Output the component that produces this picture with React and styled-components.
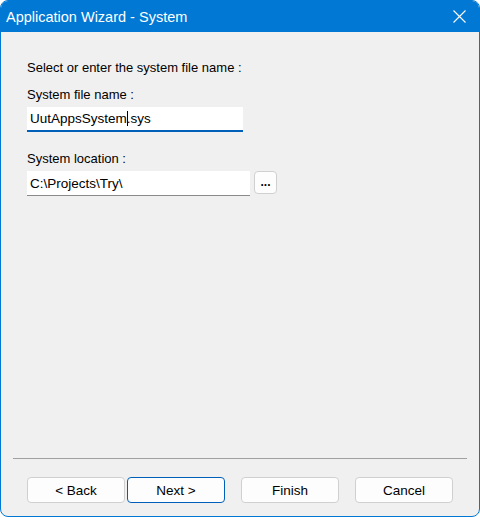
import React from "react";
import styled, { createGlobalStyle } from "styled-components";

const GlobalStyle = createGlobalStyle`
  html, body {
    margin: 0;
    padding: 0;
    background: #ffffff;
  }
  * {
    box-sizing: border-box;
  }
`;

const Window = styled.div`
  width: 480px;
  height: 517px;
  display: flex;
  flex-direction: column;
  border: 1px solid #0078d4;
  border-radius: 8px;
  overflow: hidden;
  background: #f0f0f0;
  font-family: "Segoe UI", "Liberation Sans", Arial, sans-serif;
  font-size: 13px;
  color: #000;
`;

const TitleBar = styled.div`
  height: 31px;
  flex: none;
  display: flex;
  align-items: center;
  justify-content: space-between;
  background: #0078d4;
  color: #fff;
  padding: 0 13px 0 5px;
  font-size: 14.5px;
`;

const CloseIcon = () => (
  <svg width="13" height="13" viewBox="0 0 13 13">
    <path d="M0.5 0.5 L12.5 12.5 M12.5 0.5 L0.5 12.5" stroke="#fff" strokeWidth="1.1" />
  </svg>
);

const Body = styled.div`
  flex: 1;
  display: flex;
  flex-direction: column;
  padding: 28px 12px 13px 12px;
`;

const Content = styled.div`
  flex: 1;
  display: flex;
  flex-direction: column;
  padding: 0 14px;
`;

const Label = styled.div`
  line-height: 16px;
  margin-bottom: ${(p) => p.$gap || 4}px;
`;

const Row = styled.div`
  display: flex;
  align-items: flex-start;
  gap: 4px;
  margin-bottom: ${(p) => p.$gap || 0}px;
`;

const Field = styled.div`
  width: ${(p) => p.$width}px;
  height: 25px;
  background: #fff;
  border-bottom: ${(p) => (p.$focused ? "2px solid #005fb8" : "1px solid #8a8a8a")};
  display: flex;
  align-items: center;
  padding: 0 3px;
  font-size: 13.5px;
  white-space: nowrap;
`;

const Caret = styled.span`
  display: inline-block;
  width: 1px;
  height: 15px;
  background: #000;
  margin-right: -1px;
`;

const BrowseButton = styled.div`
  width: 23px;
  height: 23px;
  border: 1px solid #d0d0d0;
  border-radius: 4px;
  background: #fdfdfd;
  display: flex;
  align-items: flex-end;
  justify-content: center;
  padding-bottom: 5px;
  font-size: 12px;
  font-weight: bold;
  line-height: 1;
`;

const Separator = styled.div`
  height: 1px;
  background: #a0a0a0;
  margin-bottom: 18px;
`;

const ButtonBar = styled.div`
  display: flex;
  padding-left: 14px;
`;

const Button = styled.div`
  width: 98px;
  height: 26px;
  display: flex;
  align-items: center;
  justify-content: center;
  background: #fdfdfd;
  border: 1px solid ${(p) => (p.$primary ? "#005fb8" : "#d0d0d0")};
  border-radius: 4px;
  margin-left: ${(p) => p.$offset || 0}px;
  font-size: 13.5px;
`;

export default function App() {
  return (
    <>
      <GlobalStyle />
      <Window>
        <TitleBar>
          <span>Application Wizard - System</span>
          <CloseIcon />
        </TitleBar>
        <Body>
          <Content>
            <Label $gap={11}>Select or enter the system file name :</Label>
            <Label>System file name :</Label>
            <Row $gap={19}>
              <Field $width={216} $focused>
                UutAppsSystem<Caret />.sys
              </Field>
            </Row>
            <Label>System location :</Label>
            <Row>
              <Field $width={223}>C:\Projects\Try\</Field>
              <BrowseButton>...</BrowseButton>
            </Row>
          </Content>
          <Separator />
          <ButtonBar>
            <Button>&lt; Back</Button>
            <Button $primary $offset={2}>Next &gt;</Button>
            <Button $offset={16}>Finish</Button>
            <Button $offset={16}>Cancel</Button>
          </ButtonBar>
        </Body>
      </Window>
    </>
  );
}
